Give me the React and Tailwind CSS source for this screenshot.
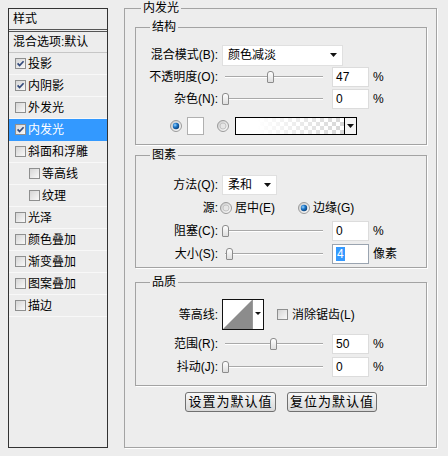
import React from 'react';

const CheckBox = ({ checked }) => (
  <svg width="11" height="11" viewBox="0 0 11 11" className="shrink-0">
    <defs>
      <linearGradient id="cbFill" x1="0" y1="0" x2="1" y2="1">
        <stop offset="0" stopColor="#d3d3d3" />
        <stop offset="1" stopColor="#fbfbfb" />
      </linearGradient>
    </defs>
    <rect x="0.5" y="0.5" width="10" height="10" fill="url(#cbFill)" stroke="#8e8f8f" />
    {checked && <path d="M2.6 5.4 L4.6 7.6 L8.6 3.2" fill="none" stroke="#324a7c" strokeWidth="1.7" />}
  </svg>
);

const Radio = ({ on }) => (
  <svg width="12" height="12" viewBox="0 0 12 12" className="shrink-0">
    <defs>
      <linearGradient id="rdRing" x1="0" y1="0" x2="1" y2="1">
        <stop offset="0" stopColor="#c9c9c9" />
        <stop offset="1" stopColor="#ffffff" />
      </linearGradient>
      <radialGradient id="rdDot" cx="0.35" cy="0.35" r="0.75">
        <stop offset="0" stopColor="#9ad6ff" />
        <stop offset="0.45" stopColor="#1c74c6" />
        <stop offset="1" stopColor="#0a3a6e" />
      </radialGradient>
    </defs>
    <circle cx="6" cy="6" r="5.5" fill="url(#rdRing)" stroke="#9a9a9a" />
    {on ? <circle cx="6" cy="6" r="3.2" fill="url(#rdDot)" /> : <circle cx="6" cy="6" r="3" fill="#e6e6e6" stroke="#c4c4c4" />}
  </svg>
);

const Arrow = () => (
  <svg width="7" height="4" viewBox="0 0 7 4" className="shrink-0">
    <path d="M0 0 H7 L3.5 4 Z" fill="#111" />
  </svg>
);

const Slider = ({ value }) => (
  <div className="relative flex h-[14px] w-[104px] items-center">
    <div className="mx-[3px] h-[2px] flex-1 border-t border-b border-t-[#a9a9a9] border-b-white" />
    <div
      className="absolute top-[1px] h-[12px] w-[7px] rounded-t-[3px] rounded-b-[1px] border border-[#8c8c8c] bg-gradient-to-b from-white to-[#dedede]"
      style={{ left: value * 0.96 }}
    />
  </div>
);

const NumBox = ({ value, focused }) => (
  <div className={`ml-[6px] flex h-[20px] w-[37px] items-center bg-white pl-[3px] border ${focused ? 'border-[#9aa4b0]' : 'border-[#dcdcdc]'}`}>
    {focused ? <span className="bg-[#3399ff] px-px leading-[14px] text-white">{value}</span> : value}
  </div>
);

const Label = ({ children }) => <div className="w-[82px] shrink-0 text-right">{children}</div>;

const SliderRow = ({ label, value, unit = '%', focused, h = 'h-[22px]' }) => (
  <div className={`flex items-center ${h}`}>
    <Label>{label}</Label>
    <div className="ml-[4px]">
      <Slider value={value} />
    </div>
    <NumBox value={value} focused={focused} />
    <span className="ml-[4px]">{unit}</span>
  </div>
);

const ListItem = ({ label, checked, indent, selected }) => (
  <div
    className={`flex h-[22px] items-center gap-[2px] border-b ${
      selected ? 'border-[#3399ff] bg-[#3399ff] text-white' : 'border-[#f8f8f8] text-black'
    } ${indent ? 'pl-[20px]' : 'pl-[6px]'}`}
  >
    <CheckBox checked={checked} />
    <span>{label}</span>
  </div>
);

const items = [
  { label: '投影', checked: true },
  { label: '内阴影', checked: true },
  { label: '外发光' },
  { label: '内发光', checked: true, selected: true },
  { label: '斜面和浮雕' },
  { label: '等高线', indent: true },
  { label: '纹理', indent: true },
  { label: '光泽' },
  { label: '颜色叠加' },
  { label: '渐变叠加' },
  { label: '图案叠加' },
  { label: '描边' },
];

const Group = ({ title, className, children }) => (
  <fieldset className={`border border-[#a3a3a3] shadow-[1px_1px_0_#fff] ${className}`}>
    <legend className="ml-[14px] px-[2px] leading-[16px]">{title}</legend>
    {children}
  </fieldset>
);

const App = () => {
  return (
    <div className="flex h-[456px] w-[448px] items-start bg-[#ededed] text-[12px] leading-[16px] text-black [font-family:'Liberation_Sans','Noto_Sans_CJK_SC',sans-serif]">
      {/* styles list */}
      <div className="ml-2 mt-2 h-[440px] w-[100px] border border-[#333]">
        <div className="flex h-[23px] items-center border-b-[3px] border-double border-[#555] pl-[4px]">样式</div>
        <div className="flex h-[21px] items-center border-b border-[#c6c6c6] pl-[4px]">混合选项:默认</div>
        {items.map((it) => (
          <ListItem key={it.label} {...it} />
        ))}
      </div>

      {/* inner glow panel */}
      <fieldset className="ml-4 h-[448px] w-[313px] border border-[#a3a3a3] pl-[10px] pr-[9px] shadow-[1px_1px_0_#fff]">
        <legend className="ml-[6px] px-[2px] leading-[16px]">内发光</legend>

        <Group title="结构" className="mt-[3px]">
          <div className="pt-[9px] pb-[8px]">
            <div className="flex h-[22px] items-center">
              <Label>混合模式(B):</Label>
              <div className="ml-[4px] flex h-[21px] w-[121px] items-center justify-between border border-[#e0e0e0] bg-white pl-[5px] pr-[5px]">
                <span>颜色减淡</span>
                <Arrow />
              </div>
            </div>
            <SliderRow label="不透明度(O):" value={47} />
            <SliderRow label="杂色(N):" value={0} />
            <div className="mt-[6px] flex h-[20px] items-center">
              <div className="ml-[34px]">
                <Radio on />
              </div>
              <div className="ml-[5px] h-[18px] w-[17px] border border-[#b0b0b0] bg-white" />
              <div className="ml-[13px]">
                <Radio />
              </div>
              <div className="ml-[6px] flex h-[18px] w-[122px] border border-black bg-[repeating-conic-gradient(#d6d6d6_0_25%,#ffffff_0_50%)] bg-[length:8px_8px]">
                <div className="flex-1 bg-gradient-to-r from-white from-20% to-transparent" />
                <div className="flex w-[12px] items-center justify-center border-l border-black bg-[#f4f4f4]">
                  <Arrow />
                </div>
              </div>
            </div>
          </div>
        </Group>

        <Group title="图素" className="mt-[2px]">
          <div className="pt-[10px] pb-[2px]">
            <div className="flex h-[23px] items-center">
              <Label>方法(Q):</Label>
              <div className="ml-[4px] flex h-[20px] w-[55px] items-center justify-between border border-[#e0e0e0] bg-white pl-[5px] pr-[5px]">
                <span>柔和</span>
                <Arrow />
              </div>
            </div>
            <div className="flex h-[23px] items-center">
              <Label>源:</Label>
              <div className="ml-[2px] flex w-[78px] items-center gap-[3px]">
                <Radio />
                <span>居中(E)</span>
              </div>
              <div className="flex items-center gap-[3px]">
                <Radio on />
                <span>边缘(G)</span>
              </div>
            </div>
            <SliderRow label="阻塞(C):" value={0} h="h-[23px]" />
            <SliderRow label="大小(S):" value={4} unit="像素" focused h="h-[23px]" />
          </div>
        </Group>

        <Group title="品质" className="mt-[6px]">
          <div className="pt-[9px] pb-[7px]">
            <div className="flex h-[31px] items-center">
              <Label>等高线:</Label>
              <svg width="42" height="31" viewBox="0 0 42 31" className="ml-[4px] shrink-0">
                <rect x="0.5" y="0.5" width="41" height="30" fill="#fff" stroke="#111" />
                <path d="M1 30 L30 1 L30 30 Z" fill="#8c8c8c" />
                <line x1="30.5" y1="1" x2="30.5" y2="30" stroke="#9a9a9a" />
                <path d="M33 13 H39 L36 16 Z" fill="#111" />
              </svg>
              <div className="ml-[13px]">
                <CheckBox />
              </div>
              <span className="ml-[4px]">消除锯齿(L)</span>
            </div>
            <div className="mt-[2px]">
              <SliderRow label="范围(R):" value={50} h="h-[23px]" />
              <SliderRow label="抖动(J):" value={0} h="h-[23px]" />
            </div>
          </div>
        </Group>

        <div className="mt-[6px] flex justify-center gap-[11px]">
          <button className="h-[20px] w-[91px] rounded-[3px] border border-[#707070] bg-gradient-to-b from-[#f7f7f7] to-[#d9d9d9] text-[13px] tracking-[1px]">
            设置为默认值
          </button>
          <button className="h-[20px] w-[90px] rounded-[3px] border border-[#707070] bg-gradient-to-b from-[#f7f7f7] to-[#d9d9d9] text-[13px] tracking-[1px]">
            复位为默认值
          </button>
        </div>
      </fieldset>
    </div>
  );
};

export default App;
